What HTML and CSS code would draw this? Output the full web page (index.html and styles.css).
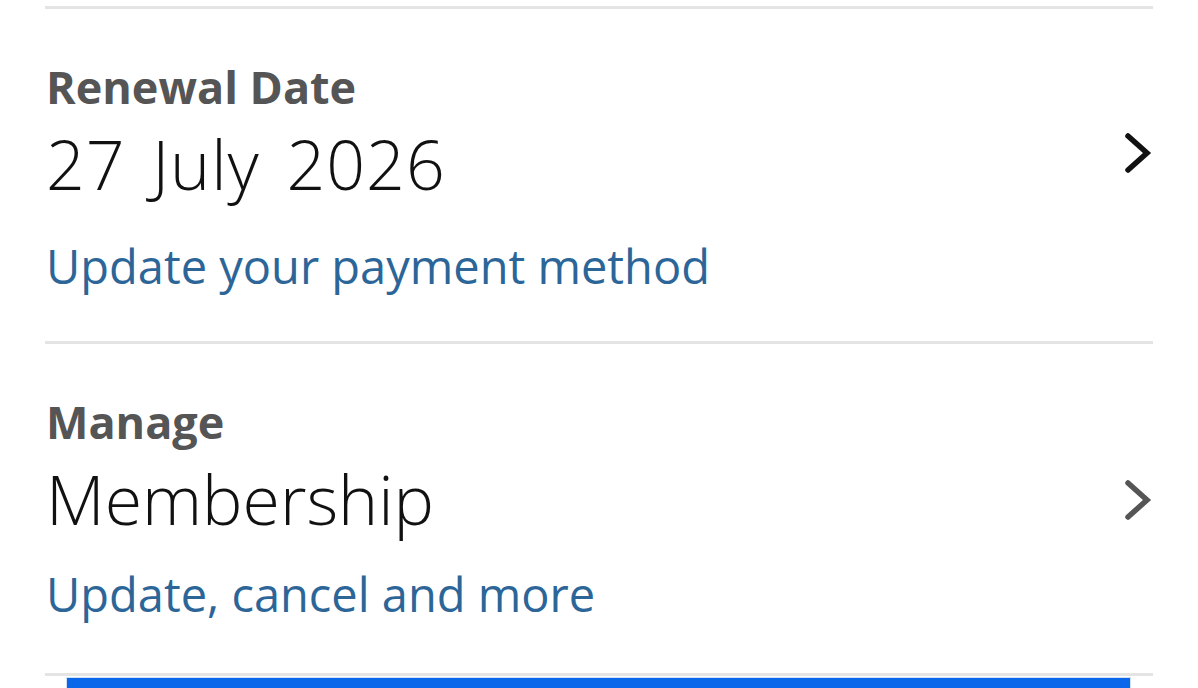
FILE: index.html
```html
<!DOCTYPE html>
<html>
<head>
<meta charset="utf-8">
<link rel="stylesheet" href="styles.css">
</head>
<body>
<div class="page">
  <div class="rule"></div>
  <div class="row row-first">
    <div class="text">
      <div class="label">Renewal Date</div>
      <div class="value date">27 July 2026</div>
      <a class="link">Update your payment method</a>
    </div>
    <svg class="chev" width="30" height="42" viewBox="0 0 30 42"><path d="M5 4 L24 21 L5 38" fill="none" stroke="#111" stroke-width="5.5" stroke-linecap="round" stroke-linejoin="miter"/></svg>
  </div>
  <div class="rule"></div>
  <div class="row row-second">
    <div class="text">
      <div class="label">Manage</div>
      <div class="value">Membership</div>
      <a class="link">Update, cancel and more</a>
    </div>
    <svg class="chev" width="30" height="42" viewBox="0 0 30 42"><path d="M5 4 L24 21 L5 38" fill="none" stroke="#555" stroke-width="5.5" stroke-linecap="round" stroke-linejoin="miter"/></svg>
  </div>
  <div class="rule"></div>
  <div class="bar"></div>
</div>
</body>
</html>
```

FILE: styles.css
```css
html, body {
  margin: 0;
  padding: 0;
  background: #fff;
}
body {
  font-family: "Open Sans", "Liberation Sans", sans-serif;
  overflow: hidden;
}
.page {
  width: 1108px;
  margin-left: 45px;
  padding-top: 6px;
}
.rule {
  height: 3px;
  background: #e4e4e4;
}
.row {
  display: flex;
  align-items: flex-start;
  justify-content: space-between;
  padding-left: 1px;
}
.row-first {
  height: 332px;
}
.row-second {
  height: 329px;
}
.text {
  display: flex;
  flex-direction: column;
}
.label {
  font-size: 45px;
  font-weight: 700;
  color: #555;
  line-height: 50px;
  margin-top: 53px;
}
.value {
  font-size: 68px;
  font-weight: 300;
  color: #111;
  line-height: 80px;
  margin-top: 12px;
}
.date {
  word-spacing: 8px;
  letter-spacing: 1px;
}
.link {
  font-size: 47px;
  color: #2c6698;
  line-height: 60px;
  margin-top: 25px;
}
.row-first .link {
  margin-top: 32px;
}
.chev {
  margin-top: 123px;
}
.row-second .chev {
  margin-top: 135px;
}
.bar {
  margin: 1px 22px 0 21px;
  height: 20px;
  background: #0b67e9;
  border: 1px solid #cfe1f7;
}
```
